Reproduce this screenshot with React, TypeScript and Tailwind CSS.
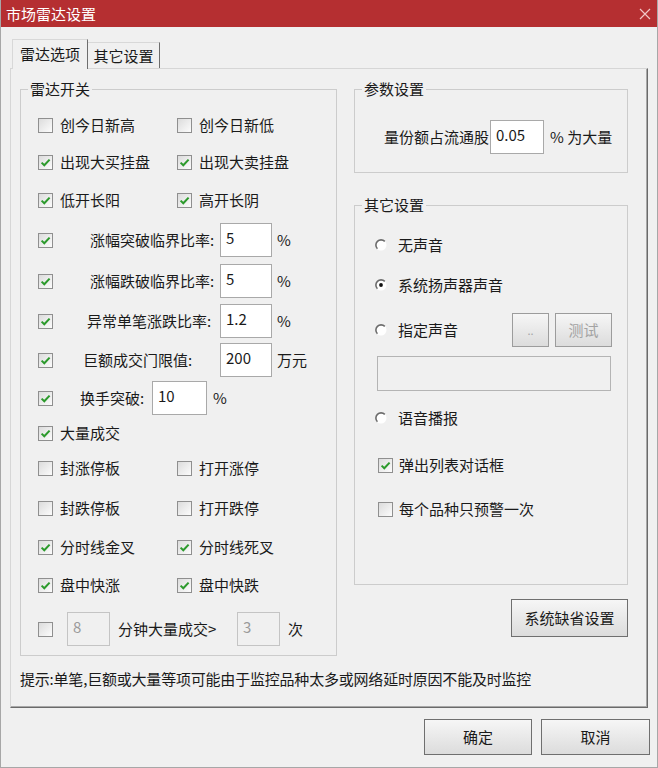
import type { ReactNode } from "react";

function Check({ on = false }: { on?: boolean }) {
  return (
    <span className="flex h-[15px] w-[15px] shrink-0 items-center justify-center border border-[#8f8f8f] bg-linear-to-br from-[#dcdcdc] to-[#fcfcfc]">
      {on && (
        <svg width="11" height="11" viewBox="0 0 11 11">
          <path d="M1.6 5.6 L4.3 8.3 L9.6 2.6" fill="none" stroke="#2c9a2c" strokeWidth="2" />
        </svg>
      )}
    </span>
  );
}

function Radio({ on = false }: { on?: boolean }) {
  return (
    <svg width="12" height="12" viewBox="0 0 12 12" className="shrink-0">
      <circle cx="6" cy="6" r="5.5" fill="#fff" />
      <path d="M9.8 2.4 A5.1 5.1 0 1 0 2.4 9.8" fill="none" stroke="#6c6c6c" strokeWidth="1.6" />
      {on && <circle cx="6" cy="6" r="1.9" fill="#111" />}
    </svg>
  );
}

function Field({ v, w, off = false }: { v: string; w: string; off?: boolean }) {
  return (
    <div
      className={`${w} h-[34px] shrink-0 border px-[5px] pt-[4px] leading-[20px] ${
        off ? "border-[#c4c4c4] bg-[#f0f0f0] text-[#9a9a9a]" : "border-[#a9a9a9] bg-white"
      }`}
    >
      {v}
    </div>
  );
}

function Btn({ children, cls, dim = false }: { children: ReactNode; cls: string; dim?: boolean }) {
  return (
    <div
      className={`${cls} flex shrink-0 items-center justify-center border bg-linear-to-b from-[#f6f6f6] to-[#dcdcdc] ${
        dim ? "border-[#9c9c9c] text-[#a3a3a3]" : "border-[#6f6f6f]"
      }`}
    >
      {children}
    </div>
  );
}

function Group({ title, cls, children }: { title: string; cls: string; children: ReactNode }) {
  return (
    <fieldset className={`${cls} border border-[#cccccc]`}>
      <legend className="ml-[7px] px-[2px] leading-[20px]">{title}</legend>
      {children}
    </fieldset>
  );
}

function Pair({ a, ao, b, bo, mt }: { a: string; ao?: boolean; b: string; bo?: boolean; mt: string }) {
  return (
    <div className={`${mt} flex h-[34px] items-center`}>
      <div className="flex w-[139px] items-center gap-[7px]">
        <Check on={ao} />
        {a}
      </div>
      <div className="flex items-center gap-[7px]">
        <Check on={bo} />
        {b}
      </div>
    </div>
  );
}

export default function App() {
  return (
    <div className="flex h-[768px] w-[658px] flex-col overflow-hidden border-x border-b border-[#a7a7a7] bg-[#f0f0f0] font-['Noto_Sans_CJK_SC',sans-serif] text-[15px] leading-[20px] text-[#1a1a1a]">
      <div className="flex h-[27px] shrink-0 items-center justify-between bg-[#b52f31] pl-[5px] pr-[6px] text-white">
        <span>市场雷达设置</span>
        <svg width="12" height="12" viewBox="0 0 12 12">
          <path d="M1 1 L11 11 M11 1 L1 11" stroke="#f1c6c6" strokeWidth="1.2" />
        </svg>
      </div>

      <div className="flex flex-1 flex-col px-[9px]">
        {/* tabs */}
        <div className="mt-[12px] flex h-[29px] items-end pl-[2px]">
          <div className="relative z-10 -mb-px flex h-[30px] w-[76px] items-center justify-center border-l border-t border-r border-l-[#d8d8d8] border-t-[#d8d8d8] border-r-[#6e6e6e] bg-[#f0f0f0] pb-[2px]">
            雷达选项
          </div>
          <div className="flex h-[26px] w-[72px] items-center justify-center border-t border-r border-t-[#d8d8d8] border-r-[#6e6e6e]">
            其它设置
          </div>
        </div>

        {/* panel */}
        <div className="flex h-[640px] flex-col border-l border-t border-r border-b border-l-[#d6d6d6] border-t-[#d6d6d6] border-r-[#6a6a6a] border-b-[#6a6a6a] pl-[9px] pt-[10px] shadow-[inset_-1px_-1px_0_#a8a8a8]">
          <div className="flex gap-[17px]">
            <Group title="雷达开关" cls="h-[577px] w-[317px]">
              <div className="flex flex-col pl-[17px]">
                <Pair mt="mt-[9px]" a="创今日新高" b="创今日新低" />
                <Pair mt="mt-[3px]" a="出现大买挂盘" ao b="出现大卖挂盘" bo />
                <Pair mt="mt-[4px]" a="低开长阳" ao b="高开长阴" bo />

                <div className="mt-[6px] flex h-[34px] items-center">
                  <Check on />
                  <span className="ml-[37px] w-[130px]">涨幅突破临界比率:</span>
                  <Field v="5" w="w-[52px]" />
                  <span className="ml-[5px]">%</span>
                </div>
                <div className="mt-[7px] flex h-[34px] items-center">
                  <Check on />
                  <span className="ml-[37px] w-[130px]">涨幅跌破临界比率:</span>
                  <Field v="5" w="w-[52px]" />
                  <span className="ml-[5px]">%</span>
                </div>
                <div className="mt-[6px] flex h-[34px] items-center">
                  <Check on />
                  <span className="ml-[34px] w-[133px]">异常单笔涨跌比率:</span>
                  <Field v="1.2" w="w-[52px]" />
                  <span className="ml-[5px]">%</span>
                </div>
                <div className="mt-[5px] flex h-[34px] items-center">
                  <Check on />
                  <span className="ml-[30px] w-[137px]">巨额成交门限值:</span>
                  <Field v="200" w="w-[52px]" />
                  <span className="ml-[5px]">万元</span>
                </div>
                <div className="mt-[4px] flex h-[34px] items-center">
                  <Check on />
                  <span className="ml-[27px] w-[72px]">换手突破:</span>
                  <Field v="10" w="w-[55px]" />
                  <span className="ml-[6px]">%</span>
                </div>

                <div className="mt-[1px] flex h-[34px] items-center gap-[7px]">
                  <Check on />
                  大量成交
                </div>
                <Pair mt="mt-[1px]" a="封涨停板" b="打开涨停" />
                <Pair mt="mt-[6px]" a="封跌停板" b="打开跌停" />
                <Pair mt="mt-[5px]" a="分时线金叉" ao b="分时线死叉" bo />
                <Pair mt="mt-[4px]" a="盘中快涨" ao b="盘中快跌" bo />

                <div className="mt-[10px] flex h-[34px] items-center">
                  <Check />
                  <span className="ml-[14px]">
                    <Field v="8" w="w-[43px]" off />
                  </span>
                  <span className="ml-[8px] w-[119px]">分钟大量成交&gt;</span>
                  <Field v="3" w="w-[43px]" off />
                  <span className="ml-[8px]">次</span>
                </div>
              </div>
            </Group>

            <div className="flex w-[274px] flex-col">
              <Group title="参数设置" cls="h-[94px] w-[274px]">
                <div className="mt-[21px] flex items-center pl-[29px]">
                  <span>量份额占流通股</span>
                  <span className="ml-[1px]">
                    <Field v="0.05" w="w-[54px]" />
                  </span>
                  <span className="ml-[6px]">% 为大量</span>
                </div>
              </Group>

              <Group title="其它设置" cls="mt-[22px] h-[390px] w-[274px]">
                <div className="flex flex-col pl-[20px]">
                  <div className="mt-[20px] flex h-[20px] items-center gap-[11px]">
                    <Radio />
                    无声音
                  </div>
                  <div className="mt-[20px] flex h-[20px] items-center gap-[11px]">
                    <Radio on />
                    系统扬声器声音
                  </div>
                  <div className="mt-[18px] flex h-[34px] items-center">
                    <Radio />
                    <span className="ml-[11px]">指定声音</span>
                    <Btn cls="ml-[54px] h-[34px] w-[37px] text-[11px]" dim>
                      ..
                    </Btn>
                    <Btn cls="ml-[6px] h-[34px] w-[57px]" dim>
                      测试
                    </Btn>
                  </div>
                  <div className="ml-[2px] mt-[9px] h-[35px] w-[234px] border border-[#b4b4b4] bg-[#f0f0f0]" />
                  <div className="mt-[17px] flex h-[20px] items-center gap-[11px]">
                    <Radio />
                    语音播报
                  </div>
                  <div className="ml-[3px] mt-[27px] flex h-[20px] items-center gap-[6px]">
                    <Check on />
                    弹出列表对话框
                  </div>
                  <div className="ml-[3px] mt-[24px] flex h-[20px] items-center gap-[6px]">
                    <Check />
                    每个品种只预警一次
                  </div>
                </div>
              </Group>

              <div className="mt-[14px] flex justify-end">
                <Btn cls="h-[38px] w-[117px]">系统缺省设置</Btn>
              </div>
            </div>
          </div>

          <div className="mt-[13px] tracking-[-0.2px]">提示:单笔,巨额或大量等项可能由于监控品种太多或网络延时原因不能及时监控</div>
        </div>

        {/* footer */}
        <div className="-mr-[2px] mt-[11px] flex justify-end gap-[9px]">
          <Btn cls="h-[36px] w-[108px]">确定</Btn>
          <Btn cls="h-[36px] w-[109px]">取消</Btn>
        </div>
      </div>
    </div>
  );
}
